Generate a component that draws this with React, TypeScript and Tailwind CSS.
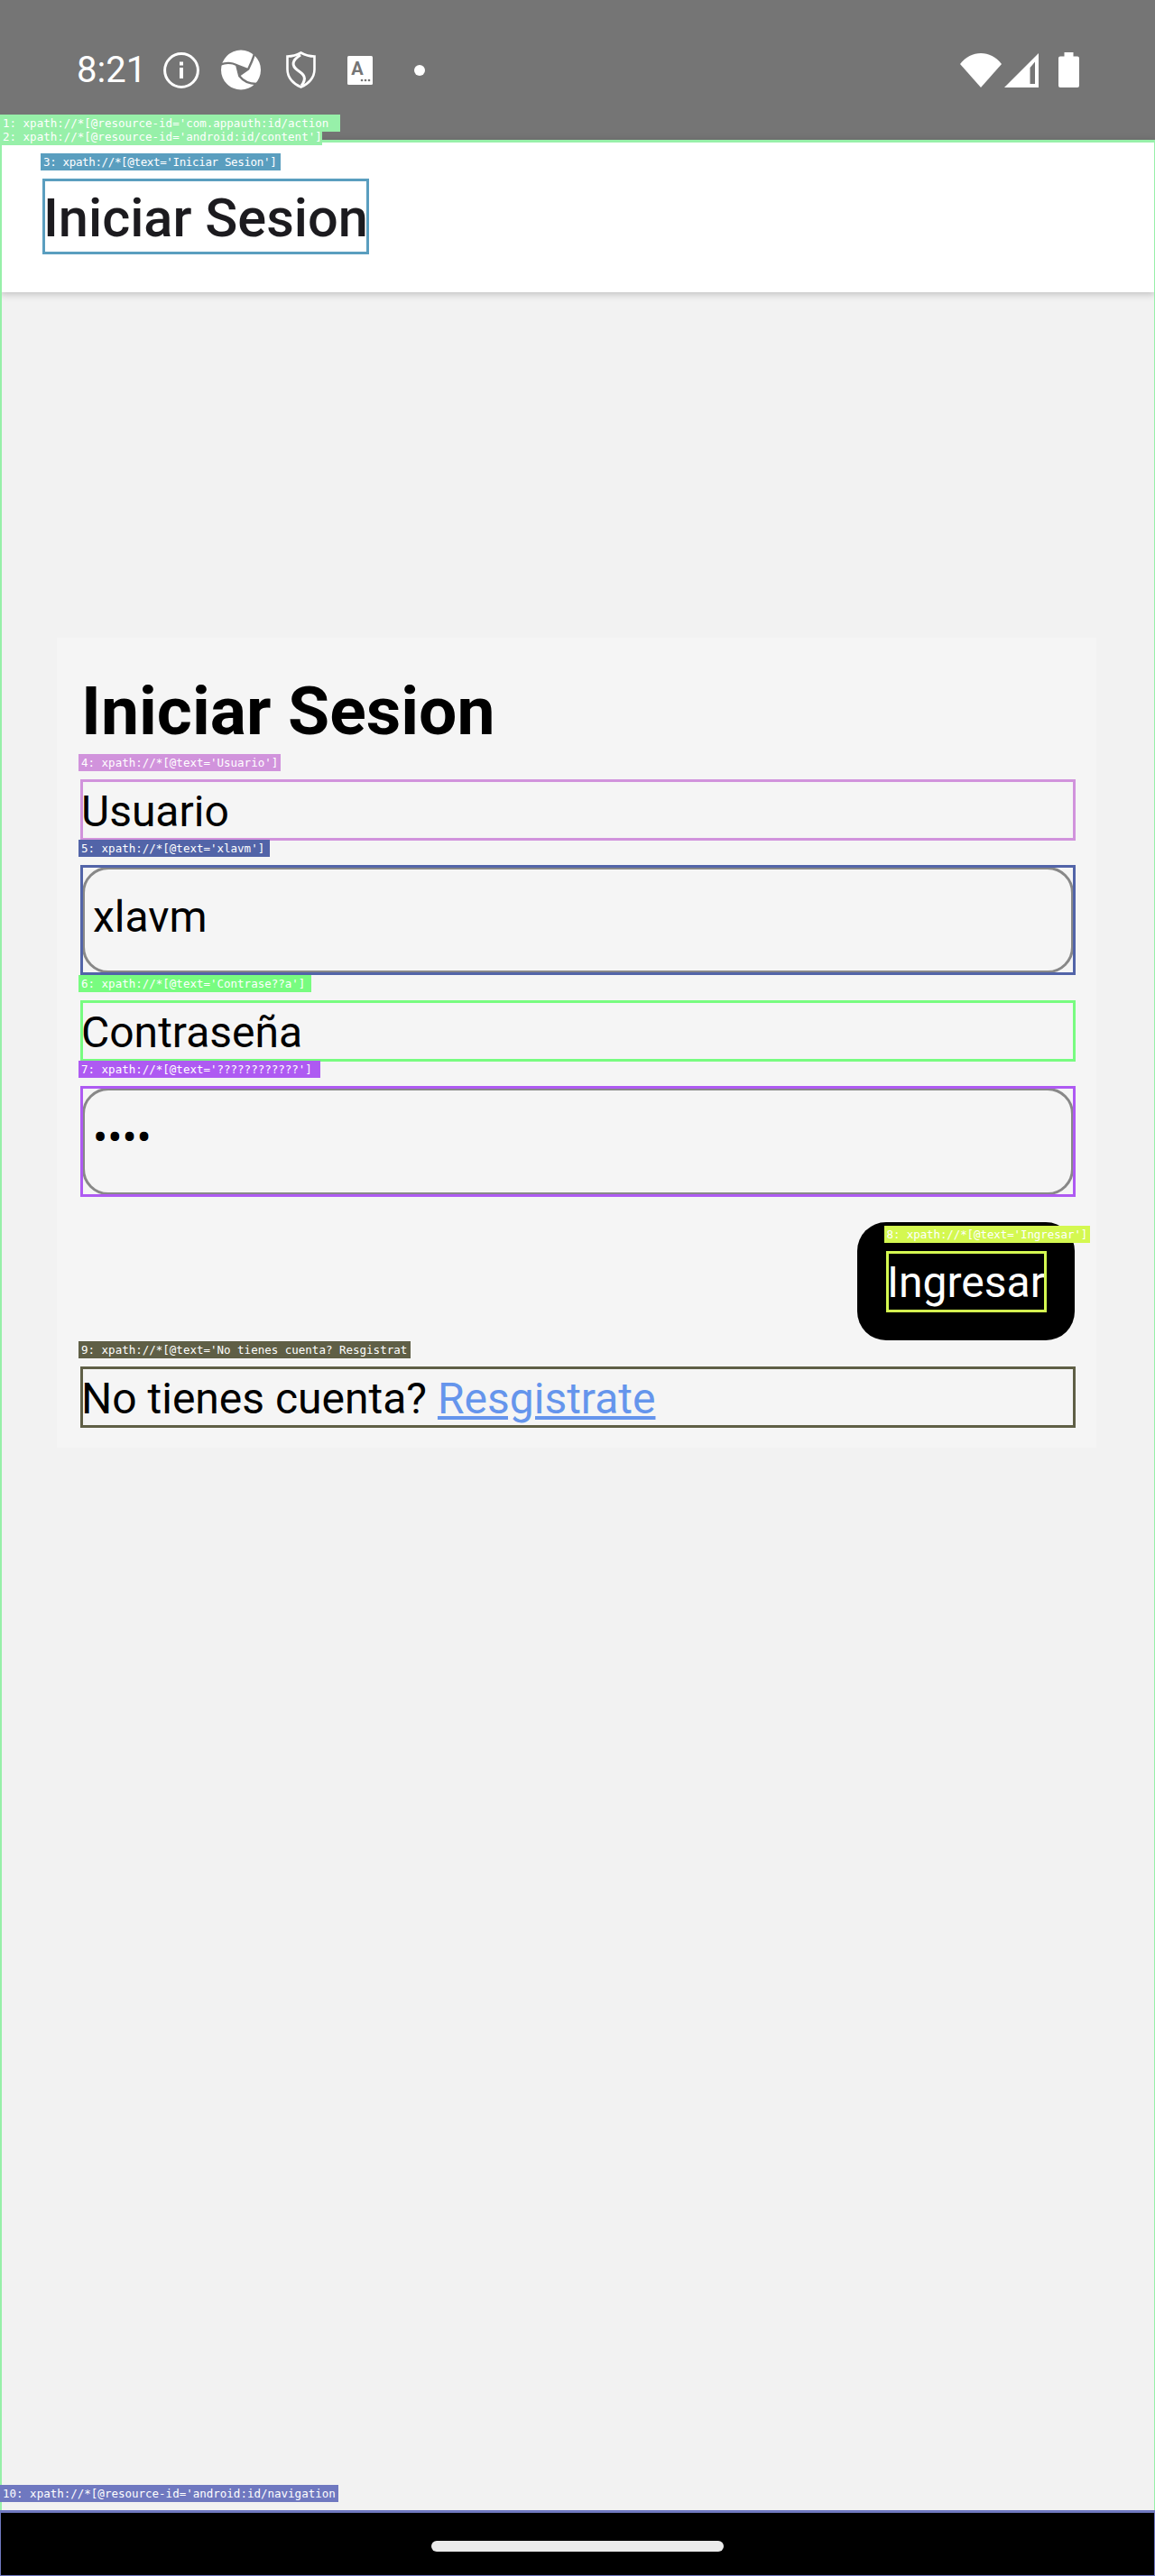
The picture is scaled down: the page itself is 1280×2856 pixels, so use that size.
import type { ReactNode } from 'react'

function Tagged({ tag, frame, label, className = '', children }: { tag: string; frame: string; label: string; className?: string; children?: ReactNode }) {
  return (
    <div className={`relative ${className}`}>
      {children}
      <div className={`absolute inset-0 z-10 pointer-events-none ${frame}`} />
      <div className={`absolute top-[-28px] z-10 h-[19px] overflow-hidden pl-[3px] font-['DejaVu_Sans_Mono',monospace] text-[12.5px] leading-[19px] whitespace-pre text-white ${label}`}>
        {tag}
      </div>
    </div>
  )
}

function StatusIcons() {
  return (
    <div className="flex items-center">
      {/* info */}
      <svg className="ml-[19px]" width="40" height="40" viewBox="0 0 40 40" fill="none">
        <circle cx="20" cy="20" r="18.4" stroke="#fff" strokeWidth="3" />
        <rect x="18" y="17" width="4" height="12" fill="#fff" />
        <rect x="18" y="10.500" width="4" height="4" fill="#fff" />
      </svg>
      {/* swirl logo */}
      <svg className="ml-[23px]" width="45" height="45" viewBox="0 0 45 45" fill="none">
        <circle cx="23" cy="22.500" r="22" fill="#fff" />
        <path d="M18 17 L31 22 L21 29Z" fill="#757575" stroke="#757575" strokeWidth="2" strokeLinejoin="round" />
        <path d="M31 22 Q35 14 38 5" stroke="#757575" strokeWidth="2.400" />
        <path d="M18 17 Q10 13 0 16.500" stroke="#757575" strokeWidth="2.400" />
        <path d="M21 29 Q28 38 40 38" stroke="#757575" strokeWidth="2.400" />
      </svg>
      {/* shield */}
      <svg className="ml-[28px]" width="33" height="41" viewBox="0 0 33 41" fill="none">
        <path d="M16.500 1.500 C21 4 26 5.500 31.500 5.500 V20 C31.500 29 25 36 16.500 39.500 C8 36 1.500 29 1.500 20 V5.500 C7 5.500 12 4 16.500 1.500Z" stroke="#fff" strokeWidth="2.600" />
        <path d="M16 4 C6 10 6 16 13 21 C19 25 24 29 17 38" stroke="#fff" strokeWidth="3" />
      </svg>
      {/* keyboard-ish A */}
      <svg className="ml-[35px]" width="28" height="32" viewBox="0 0 28 32">
        <rect width="28" height="32" rx="1.500" fill="#fff" />
        <text x="11" y="21" textAnchor="middle" fontFamily="Roboto, sans-serif" fontWeight="700" fontSize="20" fill="#757575">A</text>
        <circle cx="16" cy="27" r="1.300" fill="#757575" />
        <circle cx="20" cy="27" r="1.300" fill="#757575" />
        <circle cx="24" cy="27" r="1.300" fill="#757575" />
      </svg>
      <div className="ml-[46px] h-[12px] w-[12px] rounded-full bg-white" />
    </div>
  )
}

function SystemIcons() {
  return (
    <div className="flex items-center">
      {/* wifi */}
      <svg width="46" height="39" viewBox="0 0 46 39">
        <path d="M0 13 C12 -3 34 -3 46 13 L23 39Z" fill="#fff" />
      </svg>
      {/* signal */}
      <svg className="ml-[3px]" width="38" height="38" viewBox="0 0 38 38">
        <path fillRule="evenodd" d="M38 0 V38 H0Z M34 9.500 L28.500 16 V34 H34Z" fill="#fff" />
      </svg>
      {/* battery */}
      <svg className="ml-[22px]" width="23" height="39" viewBox="0 0 23 39">
        <path d="M6.500 0 H16.500 V4.500 H21 Q23 4.500 23 6.500 V37 Q23 39 21 39 H2 Q0 39 0 37 V6.500 Q0 4.500 2 4.500 H6.500Z" fill="#fff" />
      </svg>
    </div>
  )
}

export default function App() {
  return (
    <div className="relative flex h-[2856px] w-[1280px] flex-col bg-[#f2f2f2] font-['Roboto',sans-serif] text-black">
      {/* Status bar */}
      <div className="flex h-[155px] shrink-0 items-center justify-between bg-[#757575] pl-[85px] pr-[84px] text-white">
        <div className="flex items-center">
          <span className="text-[40px] leading-none">8:21</span>
          <StatusIcons />
        </div>
        <SystemIcons />
      </div>

      {/* Content frame */}
      <Tagged
        tag="2: xpath://*[@resource-id='android:id/content']"
        frame="border-t-[3px] border-l-2 border-r border-[#97f0a9]"
        label="left-0 w-[357px] bg-[#97f0a9] mt-[15px]"
        className="flex min-h-0 flex-1 flex-col"
      >
        <div className="flex h-[169px] shrink-0 items-start bg-white pl-[47px] pt-[43px] shadow-[0_2px_8px_rgba(0,0,0,0.22)]">
          <Tagged
            tag="3: xpath://*[@text='Iniciar Sesion']"
            frame="border-[3px] border-[#5a9ebf]"
            label="left-[-2px] w-[266px] bg-[#5a9ebf] tracking-[-0.35px]"
            className="h-[84px] px-[1px] pt-[5px] text-[59.5px] font-medium leading-[78px] text-[#1c1b1f]"
          >
            Iniciar Sesion
          </Tagged>
        </div>

        <main className="flex-1 pl-[63px] pr-[65px] pt-[383px]">
          {/* Login card */}
          <div className="flex h-[898px] flex-col bg-[#f5f5f5] pl-[26px] pr-[23px] pt-[38px]">
            <h1 className="mb-[33px] pl-[1px] text-[75px] font-bold leading-[86px]">Iniciar Sesion</h1>

            <Tagged
              tag="4: xpath://*[@text='Usuario']"
              frame="border-[3px] border-[#d193dc]"
              label="left-[-2px] w-[224px] bg-[#d193dc]"
              className="h-[68px] px-[1px] pt-[2px] text-[48px] leading-[68px]"
            >
              Usuario
            </Tagged>

            <Tagged
              tag="5: xpath://*[@text='xlavm']"
              frame="border-[3px] border-[#5264a8]"
              label="left-[-2px] w-[212px] bg-[#5264a8]"
              className="mt-[27px] h-[122px] p-[2px] text-[48px]"
            >
              <div className="h-full rounded-[29px] border-[3px] border-[#888888] pl-[9px] pt-[22px] leading-[62px]">xlavm</div>
            </Tagged>

            <Tagged
              tag="6: xpath://*[@text='Contrase??a']"
              frame="border-[3px] border-[#78fc80]"
              label="left-[-2px] w-[258px] bg-[#78fc80]"
              className="mt-[28px] h-[68px] px-[1px] pt-[2px] text-[48px] leading-[68px]"
            >
              Contraseña
            </Tagged>

            <Tagged
              tag="7: xpath://*[@text='????????????']"
              frame="border-[3px] border-[#ae5af2]"
              label="left-[-2px] w-[268px] bg-[#ae5af2]"
              className="mt-[27px] h-[123px] p-[2px] text-[48px]"
            >
              <div className="h-full rounded-[29px] border-[3px] border-[#888888] pl-[9px] pt-[22px] leading-[62px]">••••</div>
            </Tagged>

            <div className="mt-[28px] flex justify-end pr-[1px]">
              <div className="flex h-[131px] w-[241px] items-center justify-center rounded-[32px] bg-black">
                <Tagged
                  tag="8: xpath://*[@text='Ingresar']"
                  frame="border-[3px] border-[#d4f850]"
                  label="left-[-2px] w-[228px] bg-[#d4f850] tracking-[-0.1px]"
                  className="flex h-[68px] w-[178px] items-center justify-center pt-[2px] text-[48px] text-white"
                >
                  Ingresar
                </Tagged>
              </div>
            </div>

            <Tagged
              tag="9: xpath://*[@text='No tienes cuenta? Resgistrat"
              frame="border-[3px] border-[#5f5f46]"
              label="left-[-2px] w-[368px] bg-[#5f5f46]"
              className="mt-[29px] h-[68px] px-[1px] pt-[2px] text-[48px] leading-[68px]"
            >
              No tienes cuenta? <span className="text-[#6595ec] underline">Resgistrate</span>
            </Tagged>
          </div>
        </main>
      </Tagged>

      {/* Navigation bar */}
      <Tagged
        tag="10: xpath://*[@resource-id='android:id/navigation"
        frame="border-t-[3px] border-x border-b border-[#6f78c0]"
        label="left-0 w-[375px] bg-[#6f78c0]"
        className="flex h-[73px] shrink-0 items-center justify-center bg-black"
      >
        <div className="mt-[7px] h-[12px] w-[324px] rounded-full bg-[#ebebeb]" />
      </Tagged>

      {/* Overlay label for the action bar */}
      <div className="absolute left-0 top-[127px] z-10 h-[19px] w-[377px] overflow-hidden bg-[#97f0a9] pl-[3px] font-['DejaVu_Sans_Mono',monospace] text-[12.5px] leading-[19px] whitespace-pre text-white">
        1: xpath://*[@resource-id='com.appauth:id/action
      </div>
    </div>
  )
}
